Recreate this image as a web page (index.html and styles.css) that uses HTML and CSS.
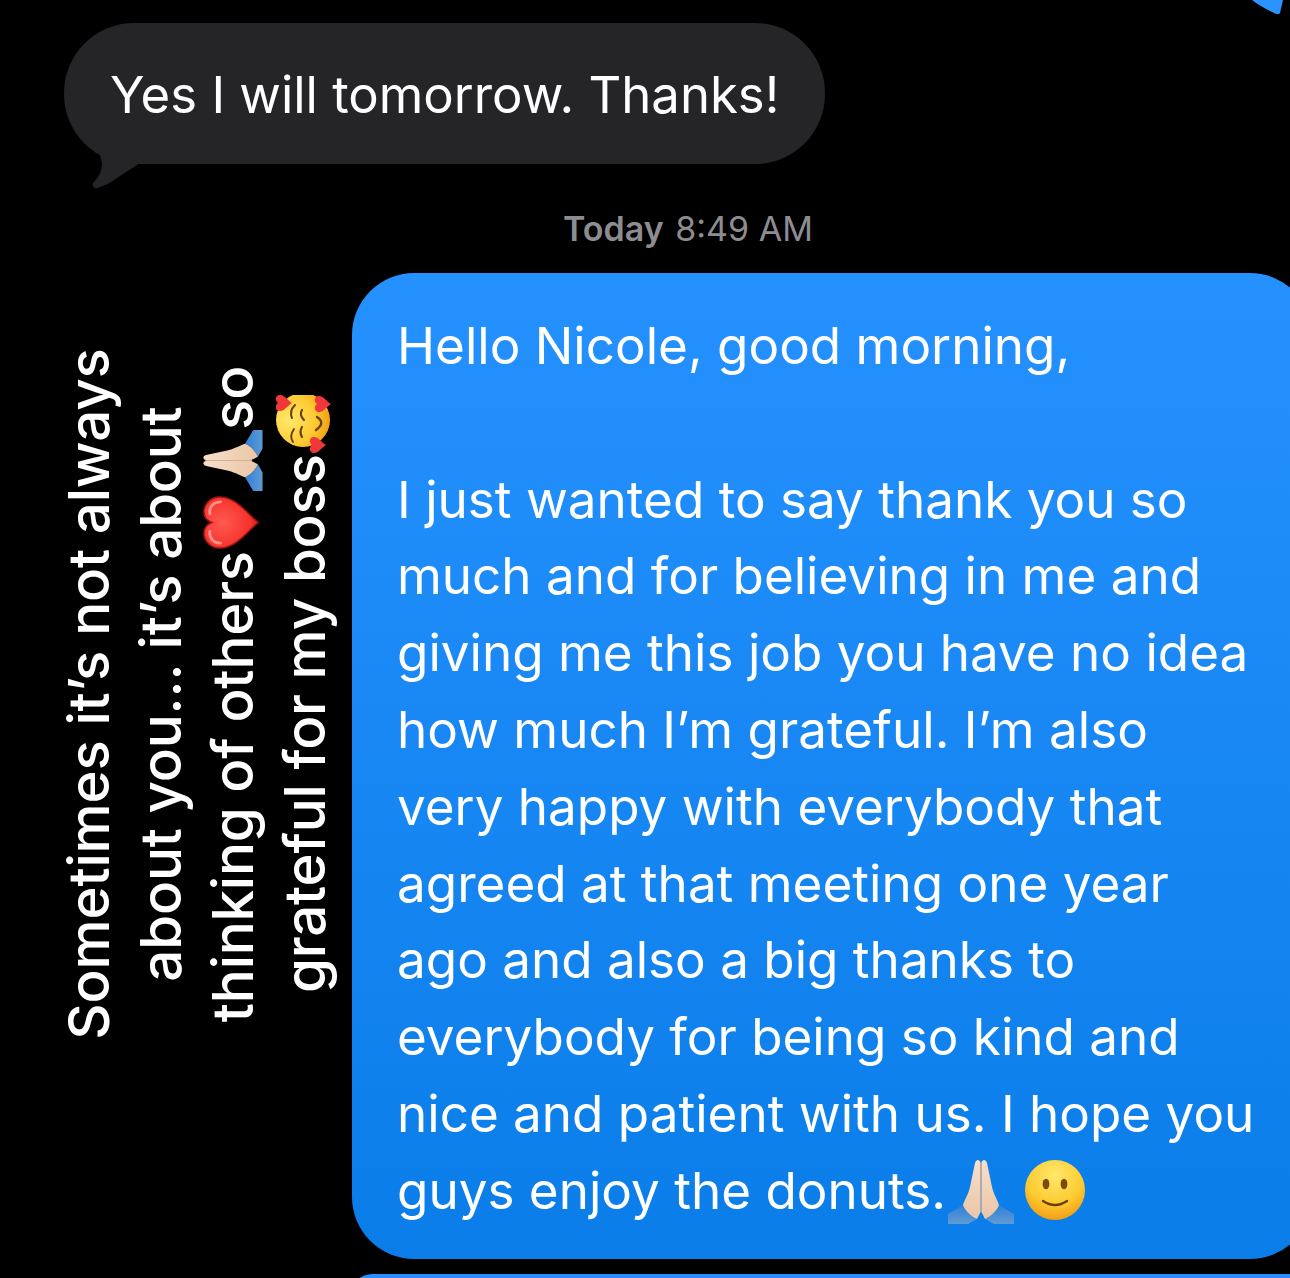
FILE: index.html
```html
<!DOCTYPE html>
<html lang="en">
<head>
<meta charset="utf-8">
<title>Messages</title>
<link rel="stylesheet" href="styles.css">
</head>
<body>
<svg class="defs" width="0" height="0" aria-hidden="true">
  <defs>
    <linearGradient id="skin" x1="0" y1="0" x2="0" y2="1"><stop offset="0" stop-color="#f8dfc8"/><stop offset="1" stop-color="#e9c6a8"/></linearGradient>
    <linearGradient id="sleeve" x1="0" y1="0" x2="0" y2="1"><stop offset="0" stop-color="#2f7fd8"/><stop offset="1" stop-color="#5f9bd4"/></linearGradient>
    <radialGradient id="yellow" cx="0.5" cy="0.25" r="0.8"><stop offset="0" stop-color="#ffe86c"/><stop offset="0.6" stop-color="#fdca30"/><stop offset="1" stop-color="#f0960f"/></radialGradient>
    <radialGradient id="red" cx="0.5" cy="0.35" r="0.75"><stop offset="0" stop-color="#ff5a50"/><stop offset="0.7" stop-color="#f5302a"/><stop offset="1" stop-color="#b5140f"/></radialGradient>
    <symbol id="pray" viewBox="0 0 66 65">
      <path fill="url(#sleeve)" d="M0 65V55L15 46C17 52 24 58 29 60L20 65Z"/>
      <path fill="url(#sleeve)" d="M66 65V55L51 46C49 52 42 58 37 60L46 65Z"/>
      <path fill="url(#skin)" d="M32.500 53V4C32 0 28 0 27 4L22 28C20 36 16 42 15 46 17 52 24 58 29 60Z"/>
      <path fill="url(#skin)" d="M33.500 53V4C34 0 38 0 39 4L44 28C46 36 50 42 51 46 49 52 42 58 37 60Z"/>
      <path fill="#d9ae8e" d="M32.500 3H33.500V53L33 54 32.500 53Z"/>
    </symbol>
    <symbol id="smile" viewBox="0 0 60 60">
      <circle cx="30" cy="30" r="30" fill="url(#yellow)"/>
      <ellipse cx="21" cy="24" rx="3.400" ry="5.200" fill="#7a4a10"/>
      <ellipse cx="39" cy="24" rx="3.400" ry="5.200" fill="#7a4a10"/>
      <path d="M18 41Q30 49 42 41" fill="none" stroke="#6b3f0c" stroke-width="2.400" stroke-linecap="round"/>
    </symbol>
    <symbol id="heart" viewBox="0 0 56 58">
      <path fill="url(#red)" stroke="#a8130e" stroke-width="1.500" d="M28 56C20 46 2 34 2 17 2 7 10 1 17 1 22 1 26 4 28 9 30 4 34 1 39 1 46 1 54 7 54 17 54 34 36 46 28 56Z"/>
      <path d="M7 18C7 10 13 6 19 7M37 7C43 6 49 10 49 18" fill="none" stroke="#ffb4ac" stroke-width="3" stroke-linecap="round" opacity="0.7"/>
    </symbol>
    <symbol id="mini-heart" viewBox="-9 -9 18 18">
      <path fill="#f0383a" d="M0 8C-3 3-9 0-8-5-7-9-2-9 0-6 2-9 7-9 8-5 9 0 3 3 0 8Z"/>
    </symbol>
    <symbol id="loved" viewBox="0 0 59 56">
      <circle cx="34" cy="27" r="27" fill="url(#yellow)"/>
      <path d="M49 19Q43 13 36 16M25 18Q18 13 12 17" fill="none" stroke="#6b3f0c" stroke-width="2" stroke-linecap="round"/>
      <path d="M44 26Q39 23 34 28M27 26Q22 23 17 26" fill="none" stroke="#6b3f0c" stroke-width="2.200" stroke-linecap="round"/>
      <path d="M37 41Q31 50 24 40" fill="none" stroke="#6b3f0c" stroke-width="2.400" stroke-linecap="round"/>
      <use href="#mini-heart" x="42" y="-1" width="18" height="18"/>
      <use href="#mini-heart" x="41" y="38" width="18" height="18"/>
      <use href="#mini-heart" x="0" y="33" width="18" height="18"/>
    </symbol>
  </defs>
</svg>

<main class="thread">
  <svg class="corner-tail" viewBox="0 0 36 15" aria-hidden="true"><path d="M4 0H35L32 13C31 15 28 14 26 13 18 9 10 5 4 0Z"/></svg>

  <div class="incoming">
    <p class="incoming-text">Yes I will tomorrow. Thanks!</p>
    <svg class="incoming-tail" viewBox="0 0 60 40" aria-hidden="true"><path d="M7 0 10 11C10 16 9 20 6 25 4 28 2 30 1 31 0 34 2 37 5 36 12 34 18 31 25 26L48 11 60 0Z"/></svg>
  </div>

  <p class="stamp"><b>Today</b> 8:49 AM</p>

  <div class="outgoing">
    <p class="line">Hello Nicole, good morning,</p>
    <p class="line blank">&nbsp;</p>
    <p class="line">I just wanted to say thank you so</p>
    <p class="line">much and for believing in me and</p>
    <p class="line">giving me this job you have no idea</p>
    <p class="line">how much I’m grateful. I’m also</p>
    <p class="line">very happy with everybody that</p>
    <p class="line">agreed at that meeting one year</p>
    <p class="line">ago and also a big thanks to</p>
    <p class="line">everybody for being so kind and</p>
    <p class="line">nice and patient with us. I hope you</p>
    <p class="line">guys enjoy the donuts.<svg class="emoji pray-big"><use href="#pray"/></svg><svg class="emoji smile-big"><use href="#smile"/></svg></p>
  </div>
  <div class="next-bubble"></div>
</main>

<aside class="caption">
  <p>Sometimes it’s not always</p>
  <p>about you... it’s about</p>
  <p>thinking of others<svg class="emoji heart-cap"><use href="#heart"/></svg><svg class="emoji pray-cap"><use href="#pray"/></svg>so</p>
  <p>grateful for my boss<svg class="emoji loved-cap"><use href="#loved"/></svg></p>
</aside>
</body>
</html>
```

FILE: styles.css
```css
html, body {
  margin: 0;
  height: 1278px;
  overflow: hidden;
  background: #000;
}
p { margin: 0; }
.defs { position: absolute; }
.thread {
  display: flex;
  flex-direction: column;
  align-items: flex-start;
  font-family: Inter, "Liberation Sans", sans-serif;
  padding-top: 23px;
}
.corner-tail {
  position: absolute;
  top: 0;
  left: 1248px;
  width: 36px;
  height: 15px;
  fill: #2b93fd;
}
.incoming {
  position: relative;
  margin-left: 64px;
  width: 761px;
  height: 141px;
  box-sizing: border-box;
  padding: 42px 0 0 46px;
  background: #252528;
  border-radius: 70px;
}
.incoming-text {
  font-size: 50.85px;
  line-height: 60px;
  color: #fff;
  white-space: nowrap;
}
.incoming-tail {
  position: absolute;
  left: 28px;
  top: 129px;
  width: 60px;
  height: 40px;
  fill: #252528;
}
.stamp {
  align-self: stretch;
  margin: 45px 0 0 563px;
  font-size: 34px;
  line-height: 40px;
  color: #8d8d91;
  white-space: nowrap;
}
.stamp b { font-weight: 600; margin-right: 2px; }
.outgoing {
  margin: 24px 0 0 352px;
  width: 960px;
  height: 986px;
  box-sizing: border-box;
  padding: 34px 0 0 45px;
  border-radius: 62px;
  background: linear-gradient(#2591ff, #0a7de8);
  color: #fff;
}
.line {
  font-size: 51.2px;
  line-height: 76.8px;
  height: 76.8px;
  white-space: nowrap;
}
.next-bubble {
  margin: 15px 0 0 352px;
  width: 960px;
  height: 40px;
  border-radius: 40px;
  background: #2591ff;
}
.emoji { display: inline-block; }
.pray-big { width: 66px; height: 65px; margin-left: 2px; vertical-align: -15px; }
.smile-big { width: 60px; height: 60px; margin-left: 11px; vertical-align: -11px; }
.caption {
  position: absolute;
  left: 197px;
  top: 694px;
  width: 800px;
  margin-left: -400px;
  margin-top: -144px;
  transform: rotate(-90deg);
  font-family: Inter, "Liberation Sans", sans-serif;
  font-size: 56.5px;
  font-weight: 500;
  letter-spacing: -0.2px;
  line-height: 72px;
  color: #fff;
  text-align: center;
  white-space: nowrap;
}
.caption p { height: 72px; }
.heart-cap { width: 57px; height: 57px; vertical-align: -7px; }
.pray-cap { width: 61px; height: 61px; vertical-align: -10px; margin-left: 3px; }
.loved-cap { width: 59px; height: 56px; vertical-align: -7px; }
```
